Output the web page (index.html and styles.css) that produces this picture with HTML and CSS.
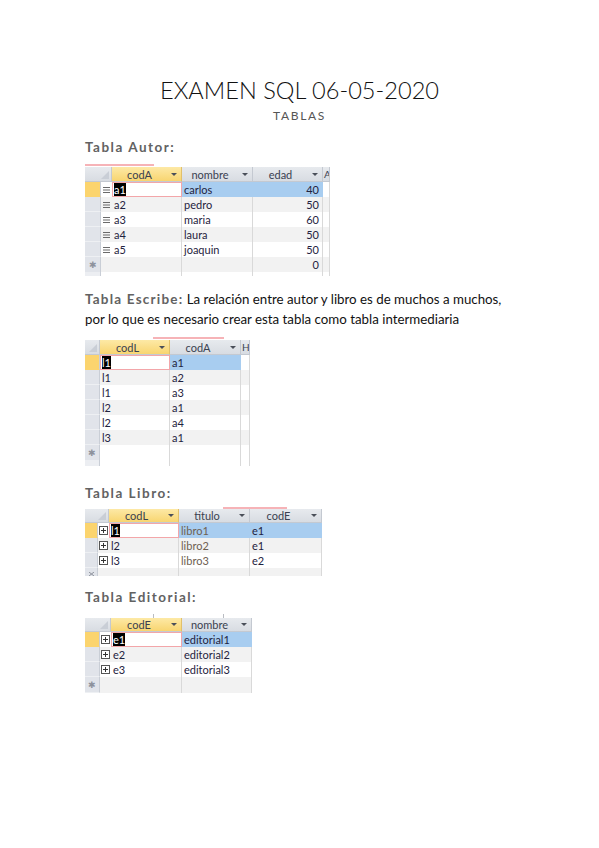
FILE: index.html
```html
<!DOCTYPE html>
<html lang="es">
<head>
<meta charset="utf-8">
<title>EXAMEN SQL 06-05-2020</title>
<link rel="stylesheet" href="styles.css">
</head>
<body>
<div class="page">
  <h1 class="title">EXAMEN SQL 06-05-2020</h1>
  <div class="subtitle">TABLAS</div>

  <h2 class="heading h-autor">Tabla Autor:</h2>
  <div class="sheet sheet-autor">
    <div class="strip"><span class="mark mark-autor"></span></div>
    <div class="hdr">
      <div class="hc corner span2"><svg class="tri" width="8" height="8" viewBox="0 0 8 8"><path d="M8 0 L8 8 L0 8 Z" fill="#c9ced6"/></svg></div>
      <div class="hc yellow"><span class="lbl">codA</span><span class="arr"></span></div>
      <div class="hc"><span class="lbl">nombre</span><span class="arr"></span></div>
      <div class="hc"><span class="lbl">edad</span><span class="arr"></span></div>
      <div class="hc clip"><span class="lbl-l">A</span></div>
    </div>
    <div class="row">
      <div class="sel cur"></div>
      <div class="exp"><svg width="8" height="8" viewBox="0 0 8 8"><path d="M0 1.5H7M0 4H7M0 6.5H7" stroke="#6a6a6a" stroke-width="1"/></svg></div>
      <div class="cell edit"><span class="caret">a1</span></div>
      <div class="cell hl">carlos</div>
      <div class="cell hl num">40</div>
      <div class="cell"></div>
    </div>
    <div class="row alt">
      <div class="sel"></div>
      <div class="exp"><svg width="8" height="8" viewBox="0 0 8 8"><path d="M0 1.5H7M0 4H7M0 6.5H7" stroke="#6a6a6a" stroke-width="1"/></svg></div>
      <div class="cell">a2</div>
      <div class="cell">pedro</div>
      <div class="cell num">50</div>
      <div class="cell"></div>
    </div>
    <div class="row">
      <div class="sel"></div>
      <div class="exp"><svg width="8" height="8" viewBox="0 0 8 8"><path d="M0 1.5H7M0 4H7M0 6.5H7" stroke="#6a6a6a" stroke-width="1"/></svg></div>
      <div class="cell">a3</div>
      <div class="cell">maria</div>
      <div class="cell num">60</div>
      <div class="cell"></div>
    </div>
    <div class="row alt">
      <div class="sel"></div>
      <div class="exp"><svg width="8" height="8" viewBox="0 0 8 8"><path d="M0 1.5H7M0 4H7M0 6.5H7" stroke="#6a6a6a" stroke-width="1"/></svg></div>
      <div class="cell">a4</div>
      <div class="cell">laura</div>
      <div class="cell num">50</div>
      <div class="cell"></div>
    </div>
    <div class="row">
      <div class="sel"></div>
      <div class="exp"><svg width="8" height="8" viewBox="0 0 8 8"><path d="M0 1.5H7M0 4H7M0 6.5H7" stroke="#6a6a6a" stroke-width="1"/></svg></div>
      <div class="cell">a5</div>
      <div class="cell">joaquin</div>
      <div class="cell num">50</div>
      <div class="cell"></div>
    </div>
    <div class="row alt">
      <div class="sel new">✱</div>
      <div class="exp"></div>
      <div class="cell"></div>
      <div class="cell"></div>
      <div class="cell num">0</div>
      <div class="cell"></div>
    </div>
    <div class="row tail tail-4">
      <div class="sel"></div>
      <div class="exp"></div>
      <div class="cell"></div>
      <div class="cell"></div>
      <div class="cell"></div>
      <div class="cell"></div>
    </div>
  </div>

  <p class="para"><span class="heading-inline">Tabla Escribe:</span> La relación entre autor y libro es de muchos a muchos,<br>por lo que es necesario crear esta tabla como tabla intermediaria</p>

  <div class="sheet sheet-escribe">
    <div class="strip"><span class="mark mark-escribe"></span></div>
    <div class="hdr">
      <div class="hc corner"><svg class="tri" width="8" height="8" viewBox="0 0 8 8"><path d="M8 0 L8 8 L0 8 Z" fill="#c9ced6"/></svg></div>
      <div class="hc yellow"><span class="lbl">codL</span><span class="arr"></span></div>
      <div class="hc"><span class="lbl">codA</span><span class="arr"></span></div>
      <div class="hc clip"><span class="lbl-l">H</span></div>
    </div>
    <div class="row">
      <div class="sel cur"></div>
      <div class="cell edit"><span class="caret">l1</span></div>
      <div class="cell hl">a1</div>
      <div class="cell"></div>
    </div>
    <div class="row alt">
      <div class="sel"></div>
      <div class="cell">l1</div>
      <div class="cell">a2</div>
      <div class="cell"></div>
    </div>
    <div class="row">
      <div class="sel"></div>
      <div class="cell">l1</div>
      <div class="cell">a3</div>
      <div class="cell"></div>
    </div>
    <div class="row alt">
      <div class="sel"></div>
      <div class="cell">l2</div>
      <div class="cell">a1</div>
      <div class="cell"></div>
    </div>
    <div class="row">
      <div class="sel"></div>
      <div class="cell">l2</div>
      <div class="cell">a4</div>
      <div class="cell"></div>
    </div>
    <div class="row alt">
      <div class="sel"></div>
      <div class="cell">l3</div>
      <div class="cell">a1</div>
      <div class="cell"></div>
    </div>
    <div class="row">
      <div class="sel new">✱</div>
      <div class="cell"></div>
      <div class="cell"></div>
      <div class="cell"></div>
    </div>
    <div class="row tail tail-6">
      <div class="sel"></div>
      <div class="cell"></div>
      <div class="cell"></div>
      <div class="cell"></div>
    </div>
  </div>

  <h2 class="heading h-libro">Tabla Libro:</h2>
  <div class="sheet sheet-libro">
    <div class="strip"><span class="mark mark-libro"></span></div>
    <div class="hdr hdr-14">
      <div class="hc corner span2"><svg class="tri" width="8" height="8" viewBox="0 0 8 8"><path d="M8 0 L8 8 L0 8 Z" fill="#c9ced6"/></svg></div>
      <div class="hc yellow"><span class="lbl">codL</span><span class="arr"></span></div>
      <div class="hc"><span class="lbl">titulo</span><span class="arr"></span></div>
      <div class="hc"><span class="lbl">codE</span><span class="arr"></span></div>
    </div>
    <div class="row">
      <div class="sel cur"></div>
      <div class="exp"><svg width="9" height="9" viewBox="0 0 9 9"><rect x="0.5" y="0.5" width="8" height="8" fill="#fff" stroke="#555"/><path d="M2 4.5H7M4.5 2V7" stroke="#333"/></svg></div>
      <div class="cell edit"><span class="caret">l1</span></div>
      <div class="cell hl brown">libro1</div>
      <div class="cell hl">e1</div>
    </div>
    <div class="row alt">
      <div class="sel"></div>
      <div class="exp"><svg width="9" height="9" viewBox="0 0 9 9"><rect x="0.5" y="0.5" width="8" height="8" fill="#fff" stroke="#555"/><path d="M2 4.5H7M4.5 2V7" stroke="#333"/></svg></div>
      <div class="cell">l2</div>
      <div class="cell brown">libro2</div>
      <div class="cell">e1</div>
    </div>
    <div class="row">
      <div class="sel"></div>
      <div class="exp"><svg width="9" height="9" viewBox="0 0 9 9"><rect x="0.5" y="0.5" width="8" height="8" fill="#fff" stroke="#555"/><path d="M2 4.5H7M4.5 2V7" stroke="#333"/></svg></div>
      <div class="cell">l3</div>
      <div class="cell brown">libro3</div>
      <div class="cell">e2</div>
    </div>
    <div class="row alt tail tail-8">
      <div class="sel cut"><svg width="7" height="4" viewBox="0 0 7 4"><path d="M1 0L6 4M6 0L1 4" stroke="#8d929c"/></svg></div>
      <div class="exp"></div>
      <div class="cell"></div>
      <div class="cell"></div>
      <div class="cell"></div>
    </div>
  </div>

  <h2 class="heading h-editorial">Tabla Editorial:</h2>
  <div class="sheet sheet-editorial">
    <div class="strip strip-4"><span class="tick tick-1"></span><span class="tick tick-2"></span></div>
    <div class="hdr hdr-14">
      <div class="hc corner span2"><svg class="tri" width="8" height="8" viewBox="0 0 8 8"><path d="M8 0 L8 8 L0 8 Z" fill="#c9ced6"/></svg></div>
      <div class="hc yellow"><span class="lbl">codE</span><span class="arr"></span></div>
      <div class="hc"><span class="lbl">nombre</span><span class="arr"></span></div>
    </div>
    <div class="row">
      <div class="sel cur"></div>
      <div class="exp"><svg width="9" height="9" viewBox="0 0 9 9"><rect x="0.5" y="0.5" width="8" height="8" fill="#fff" stroke="#555"/><path d="M2 4.5H7M4.5 2V7" stroke="#333"/></svg></div>
      <div class="cell edit"><span class="caret">e1</span></div>
      <div class="cell hl">editorial1</div>
    </div>
    <div class="row alt">
      <div class="sel"></div>
      <div class="exp"><svg width="9" height="9" viewBox="0 0 9 9"><rect x="0.5" y="0.5" width="8" height="8" fill="#fff" stroke="#555"/><path d="M2 4.5H7M4.5 2V7" stroke="#333"/></svg></div>
      <div class="cell">e2</div>
      <div class="cell">editorial2</div>
    </div>
    <div class="row">
      <div class="sel"></div>
      <div class="exp"><svg width="9" height="9" viewBox="0 0 9 9"><rect x="0.5" y="0.5" width="8" height="8" fill="#fff" stroke="#555"/><path d="M2 4.5H7M4.5 2V7" stroke="#333"/></svg></div>
      <div class="cell">e3</div>
      <div class="cell">editorial3</div>
    </div>
    <div class="row alt">
      <div class="sel new">✱</div>
      <div class="exp"></div>
      <div class="cell"></div>
      <div class="cell"></div>
    </div>
  </div>
</div>
</body>
</html>
```

FILE: styles.css
```css
* { box-sizing: border-box; }
html, body { margin: 0; padding: 0; background: #fff; }
body { width: 599px; height: 848px; overflow: hidden; font-family: Lato, "Open Sans", sans-serif; }

.page { padding: 75px 0 0 85px; }

.title {
  margin: 0 0 0 -85px;
  font-weight: 300;
  font-size: 23.6px;
  line-height: 30px;
  color: #111;
  text-align: center;
}
.subtitle {
  margin: 3px 0 0 -85px;
  font-size: 12px;
  line-height: 16px;
  letter-spacing: 1.7px;
  color: #555;
  text-align: center;
}

.heading, .heading-inline {
  font-weight: 700;
  font-size: 13.5px;
  letter-spacing: 1.5px;
  color: #626262;
}
.heading { margin: 0; line-height: 18px; }
.h-autor { margin-top: 14px; }
.h-libro { margin-top: 18px; }
.h-editorial { margin-top: 12px; }

.para {
  margin: 13px 0 0 0;
  font-size: 13.3px;
  line-height: 20px;
  color: #111;
}
.heading-inline { letter-spacing: 1.2px; }

/* datasheet */
.sheet {
  display: flex;
  flex-direction: column;
  width: max-content;
  font-size: 11px;
  color: #1f2340;
  margin-top: 8px;
}
.sheet-libro { margin-top: 4px; }
.sheet-autor { --cols: 16px 11px 70px 71px 70px 7px; }
.sheet-escribe { --cols: 15px 70px 71px 9px; }
.sheet-libro { --cols: 13px 11px 70px 71px 72px; }
.sheet-editorial { --cols: 15px 11px 71px 70px; }

.strip { height: 3px; display: flex; }
.strip-4 { height: 4px; }
.mark { height: 2px; background: #f6b3b7; }
.mark-autor { width: 69px; margin-left: 0; }
.mark-escribe { width: 71px; margin-left: 68px; }
.mark-libro { width: 64px; margin-left: 138px; margin-top: 1px; }
.tick { width: 1px; height: 4px; background: #b9bcc2; }
.tick-1 { margin-left: 68px; }
.tick-2 { margin-left: 69px; }

.hdr, .row { display: grid; grid-template-columns: var(--cols); }
.hdr { height: 15px; }
.hdr-14 { height: 14px; }
.row { height: 15px; }

.hc {
  display: flex;
  align-items: center;
  background: linear-gradient(#e7eaee, #d8dce2);
  border-right: 1px solid #c4c9d1;
  border-bottom: 1px solid #c4c9d1;
  color: #3a4150;
  overflow: hidden;
  white-space: nowrap;
}
.hc.yellow { background: linear-gradient(#fde9a6, #f8d570); border-right-color: #e2c06a; }
.hc.corner { justify-content: flex-end; align-items: flex-end; padding: 0 2px 2px 0; }
.span2 { grid-column: span 2; }
.lbl { flex: 1; text-align: center; }
.lbl-l { padding-left: 1px; font-size: 10px; }
.arr {
  width: 0; height: 0;
  border-left: 3px solid transparent;
  border-right: 3px solid transparent;
  border-top: 3px solid #4a4f59;
}
.hc .arr { margin-right: 4px; margin-left: 4px; }

.sel {
  background: #e1e4ea;
  border-right: 1px solid #c9ced6;
  border-bottom: 1px solid #eef0f3;
}
.sel.cur { background: #fbd46e; border-bottom-color: #fbd46e; }
.sel.new {
  color: #8d929c;
  font-size: 9px;
  line-height: 15px;
  text-align: center;
}
.sel.cut { display: flex; align-items: flex-end; justify-content: center; }

.exp {
  display: flex;
  align-items: center;
  justify-content: center;
  background: #fff;
}
.row.alt .exp { background: #f2f2f2; }

.cell {
  padding: 0 2px;
  line-height: 15px;
  background: #fff;
  border-right: 1px solid #d9d9d9;
  white-space: nowrap;
  overflow: hidden;
}
.row.alt .cell { background: #f2f2f2; }
.cell.num { text-align: right; padding-right: 3px; }
.cell.hl { background: #a8cdf0; border-right-color: #a8cdf0; }
.cell.edit {
  background: #fff;
  border: 1px solid #f3a6a9;
  line-height: 13px;
  padding-left: 1px;
}
.caret { background: #000; color: #fff; }
.brown { color: #6e6050; }

.tail-4 { height: 4px; }
.tail-6 { height: 6px; }
.tail-8 { height: 8px; }
.row.tail .sel { background: #eceef2; border-bottom: 0; }
.row.tail .cell, .row.tail .exp { background: #fff; }
.row.tail.alt .cell, .row.tail.alt .exp { background: #f2f2f2; }
.row.tail.alt .sel { background: #e1e4ea; }
```
